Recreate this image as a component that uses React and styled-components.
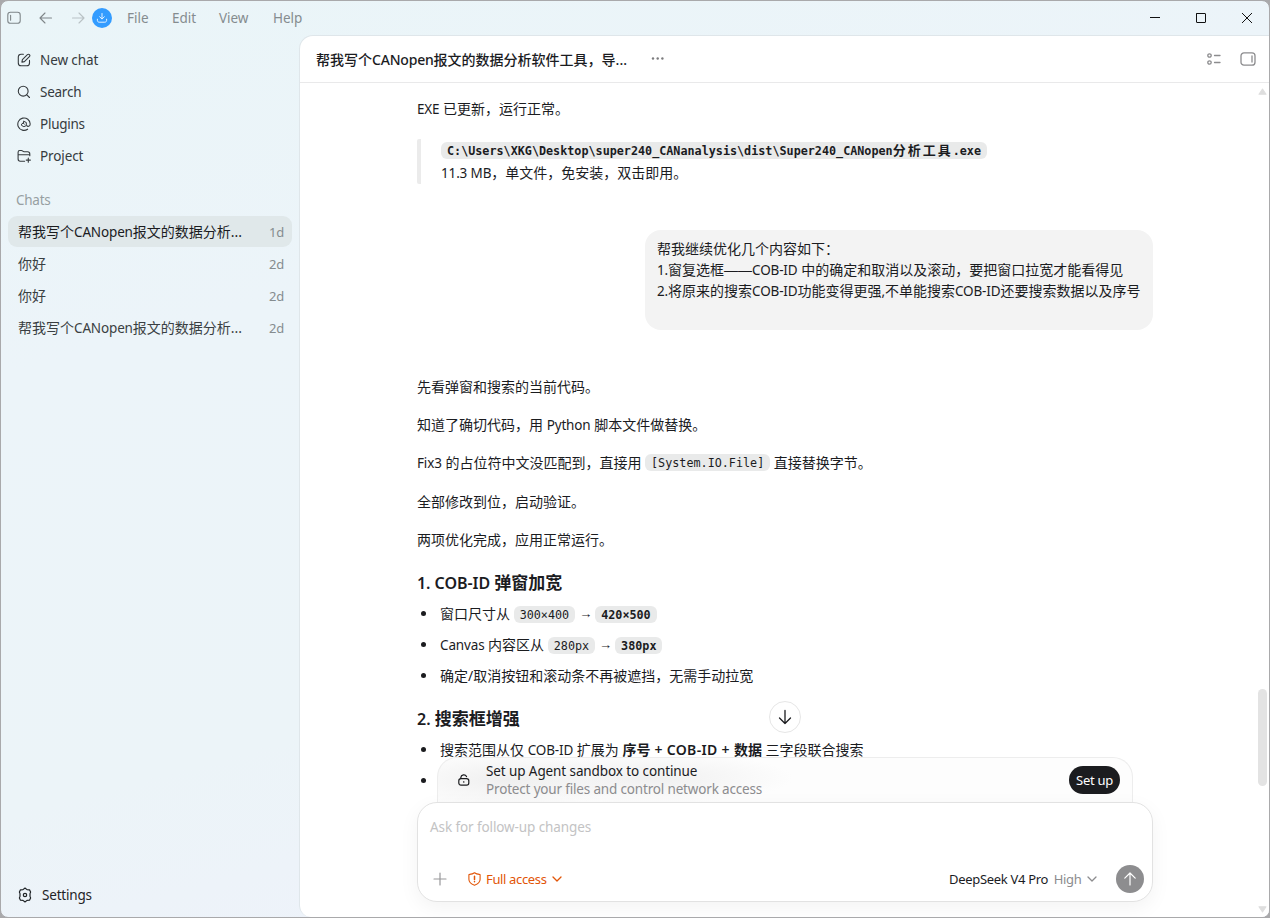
import styled, { createGlobalStyle } from 'styled-components';

const GlobalStyle = createGlobalStyle`
  * {
    box-sizing: border-box;
  }
  body {
    margin: 0;
    background: #a9a9ab;
    font-family: 'Noto Sans', 'Noto Sans CJK SC', sans-serif;
    font-size: 14px;
    color: #1b1c1f;
  }
  p, h3, ul, blockquote {
    margin: 0;
    padding: 0;
  }
  button {
    font-family: inherit;
    border: none;
    padding: 0;
  }
  svg {
    display: block;
    flex: none;
  }
`;

const Window = styled.div`
  width: 1270px;
  height: 918px;
  display: flex;
  flex-direction: column;
  overflow: hidden;
  border: 1px solid #a9a9ab;
  border-radius: 8px;
  background: linear-gradient(165deg, #eaf5f8 0%, #ecf4f9 30%, #ecf4f8 65%, #eef2fa 85%, #eef3fa 100%);
`;

/* latin runs inside of the CJK text, slightly tightened */
const En = styled.span`
  font-size: ${(props) => props.$size || 13.5}px;
  letter-spacing: ${(props) => props.$ls ?? -0.15}px;
`;

// ---- title bar
const TitleBar = styled.header`
  height: 34px;
  flex: none;
  display: flex;
  align-items: center;
  justify-content: space-between;
  padding-left: 6px;
`;

const TitleLeft = styled.div`
  display: flex;
  align-items: center;
  color: #7f8689;
`;

const NavIcon = styled.span`
  width: ${(props) => props.$w || 32}px;
  display: flex;
  opacity: ${(props) => (props.$dim ? 0.45 : 1)};
`;

const UpdateBadge = styled.button`
  width: 20px;
  height: 20px;
  border-radius: 50%;
  background: #339cff;
  color: #e6f3ff;
  display: flex;
  align-items: center;
  justify-content: center;
  margin-right: 15px;
`;

const MenuItem = styled.span`
  width: ${(props) => props.$w}px;
  font-size: 13.5px;
  line-height: 20px;
  letter-spacing: ${(props) => props.$ls || 0}px;
  color: #858c8f;
`;

const WinControls = styled.div`
  display: flex;
  margin-right: -1px;
  color: #111;
`;

const WinBtn = styled.span`
  width: 46px;
  height: 34px;
  display: flex;
  align-items: center;
  justify-content: center;
`;

// ---- sidebar
const Body = styled.div`
  flex: 1;
  min-height: 0;
  display: flex;
`;

const Sidebar = styled.nav`
  width: 298px;
  flex: none;
  display: flex;
  flex-direction: column;
  padding: 9px 7px 8px;
`;

const NavRow = styled.div`
  height: 32px;
  display: flex;
  align-items: center;
  gap: 9px;
  padding-left: 9px;
  font-size: 13.5px;
  letter-spacing: ${(props) => props.$ls || 0}px;
  color: #363b3e;
`;

const SectionTitle = styled.div`
  height: 32px;
  line-height: 32px;
  margin-top: 12px;
  padding-left: 8px;
  font-size: 13.5px;
  letter-spacing: -0.25px;
  color: #979fa2;
`;

const ChatRow = styled.div`
  height: 31px;
  margin-bottom: 1px;
  display: flex;
  align-items: center;
  justify-content: space-between;
  padding: 0 8px 0 10px;
  border-radius: 9px;
  white-space: nowrap;
  background: ${(props) => (props.$active ? '#e0e8ea' : 'transparent')};
  color: ${(props) => (props.$active ? '#1b1c1f' : '#3a3f42')};
`;

const ChatName = styled.span`
  padding-bottom: 2px;
`;

const Age = styled.span`
  font-size: 13px;
  letter-spacing: -0.2px;
  color: #858c8f;
`;

const SettingsRow = styled(NavRow)`
  margin-top: auto;
  margin-bottom: -2px;
  color: #1f2326;
`;

// ---- main card
const Main = styled.main`
  position: relative;
  flex: 1;
  min-width: 0;
  display: flex;
  flex-direction: column;
  background: #fff;
  border: 1px solid #dfe6ea;
  border-right: none;
  border-bottom: none;
  border-radius: 14px 0 0 12px;
  overflow: hidden;
`;

const MainHeader = styled.div`
  height: 47px;
  flex: none;
  display: flex;
  align-items: center;
  padding: 0 13px 0 16px;
  border-bottom: 1px solid #e9e9ea;
`;

const Title = styled.div`
  width: 335px;
  font-weight: 500;
  white-space: nowrap;
`;

const HeaderIcons = styled.div`
  margin-left: auto;
  display: flex;
  align-items: center;
  gap: 19px;
  color: #8c8c8e;
`;

const Thread = styled.div`
  flex: 1;
  min-height: 0;
  overflow: hidden;
  padding: 15px 0 0 117px;
`;

const Column = styled.article`
  width: 736px;
  display: flex;
  flex-direction: column;
  line-height: 22px;
  white-space: nowrap;
`;

const Para = styled.p`
  height: 22px;
  margin-bottom: 16.25px;
`;

const Quote = styled.blockquote`
  height: 45px;
  margin: 3px 0 46px;
  padding: 1px 0 0 20px;
  border-left: 4px solid #ebebeb;
  border-radius: 2px;
`;

const QuoteLine = styled.div`
  height: 22px;
`;

const Bubble = styled.div`
  width: 508px;
  height: 100px;
  align-self: flex-end;
  margin-bottom: 45.65px;
  padding: 8px 12px;
  border-radius: 16px;
  background: #f3f3f3;
  line-height: 21px;
`;

const BubbleLine = styled.div`
  height: 21px;
`;

const Dash = styled.span`
  font-family: 'Liberation Sans', sans-serif;
  line-height: 1;
`;

const Code = styled.code`
  display: inline-block;
  height: 17px;
  line-height: 18px;
  padding: 0 6px;
  border-radius: 6px;
  background: #e9eaea;
  vertical-align: 1px;
  font-family: 'DejaVu Sans Mono', 'Noto Sans CJK SC', monospace;
  font-size: 11.76px;
  font-weight: ${(props) => (props.$bold ? 700 : 400)};
`;

const CodeHan = styled.span`
  font-size: 13px;
  letter-spacing: 2px;
  line-height: 1;
`;

const Heading = styled.h3`
  height: 26px;
  line-height: 26px;
  margin-top: ${(props) => props.$top || 0}px;
  font-size: 17px;
  font-weight: 600;
`;

const List = styled.ul`
  list-style: none;
  padding-top: 3px;
`;

const Item = styled.li`
  height: 31px;
  line-height: 30px;
  display: flex;
  align-items: center;
  white-space: pre;

  &::before {
    content: '';
    width: 5px;
    height: 5px;
    margin: 0 14px 2px 4px;
    border-radius: 50%;
    background: #1b1c1f;
  }
`;

const Arrow = styled.span`
  padding: 0 3px 0 4px;
  font-family: 'Liberation Sans', sans-serif;
  font-size: 13px;
`;

const Strong = styled.strong`
  font-weight: 600;
`;

// ---- scrollbar, drawn over the thread
const ScrollTrack = styled.div`
  position: absolute;
  top: 52px;
  right: 1px;
  bottom: 4px;
  width: 11px;
  display: flex;
  flex-direction: column;
  align-items: center;
`;

const Thumb = styled.div`
  width: 9px;
  height: 97px;
  margin-top: 594px;
  margin-bottom: auto;
  border-radius: 5px;
  background: #e3e3e3;
`;

// ---- composer dock
const Dock = styled.div`
  position: absolute;
  left: 117px;
  bottom: 15px;
  width: 736px;
  display: flex;
  flex-direction: column;
  align-items: center;
`;

const ScrollDown = styled.button`
  width: 32px;
  height: 32px;
  margin-bottom: 24px;
  border: 1px solid #e6e6e6;
  border-radius: 50%;
  background: #fff;
  color: #1b1c1f;
  display: flex;
  align-items: center;
  justify-content: center;
`;

const Banner = styled.div`
  width: 696px;
  height: 45px;
  display: flex;
  align-items: center;
  padding: 0 12px 0 20px;
  border: 1px solid #ededed;
  border-bottom: none;
  border-radius: 20px 20px 0 0;
  background:
    radial-gradient(ellipse 120px 28px at 70px 22px, #efefef, rgba(241, 241, 241, 0)),
    radial-gradient(ellipse 140px 26px at 215px 20px, #f0f0f0, rgba(242, 242, 242, 0)),
    #fdfdfd;
`;

const BannerText = styled.div`
  margin-left: 16px;
  font-size: 13.5px;
  line-height: 18px;
  letter-spacing: -0.1px;
`;

const Muted = styled.div`
  letter-spacing: -0.17px;
  color: #8c8c8e;
`;

const SetupBtn = styled.button`
  width: 51px;
  height: 28px;
  margin-left: auto;
  border-radius: 14px;
  background: #1b1c1f;
  color: #fff;
  font-size: 13px;
  letter-spacing: -0.3px;
`;

const Composer = styled.div`
  width: 736px;
  height: 100px;
  display: flex;
  flex-direction: column;
  justify-content: space-between;
  padding: 13px 8px 7px 12px;
  border: 1px solid #e2e2e2;
  border-radius: 20px;
  background: #fff;
  box-shadow: 0 6px 20px rgba(0, 0, 0, 0.05);
`;

const Placeholder = styled.div`
  line-height: 22px;
  font-size: 13.5px;
  letter-spacing: -0.1px;
  color: #c3c3c4;
`;

const Tools = styled.div`
  height: 30px;
  display: flex;
  align-items: center;
  font-size: 13px;
`;

const Access = styled.span`
  display: flex;
  align-items: center;
  gap: 5px;
  margin-left: 18px;
  letter-spacing: -0.35px;
  color: #e25507;
`;

const Model = styled.span`
  display: flex;
  align-items: center;
  gap: 5.5px;
  margin-left: auto;
  margin-right: 19px;
  letter-spacing: -0.3px;
  color: #1b1c1f;
`;

const Effort = styled.span`
  color: #8c8c8e;
`;

const Send = styled.button`
  width: 28px;
  height: 28px;
  border-radius: 50%;
  background: #8d8d8f;
  color: #fff;
  display: flex;
  align-items: center;
  justify-content: center;
`;

const Svg = ({ size = 14, w, h, sw = 1.1, children }) => (
  <svg
    width={w || size}
    height={h || size}
    viewBox={`0 0 ${w || size} ${h || size}`}
    fill="none"
    stroke="currentColor"
    strokeWidth={sw}
    strokeLinecap="round"
    strokeLinejoin="round"
  >
    {children}
  </svg>
);

const ChevronDown = () => (
  <Svg w={10} h={6} sw={1.3}><path d="M1 1l4 4 4-4" /></Svg>
);

const navItems = [
  {
    label: 'New chat',
    ls: -0.1,
    icon: <><path d="M6.4 1.3H4.1a2.8 2.8 0 0 0-2.8 2.8v5.8a2.8 2.8 0 0 0 2.8 2.8h5.6a2.8 2.8 0 0 0 2.8-2.8V7.4" /><path d="M4.9 9.1l.5-2.5 5-5a1.4 1.4 0 0 1 2 2l-5 5z" /></>,
  },
  {
    label: 'Search',
    ls: -0.25,
    icon: <><circle cx="6.2" cy="6.2" r="4.9" /><path d="M9.8 9.8l2.7 2.7" /></>,
  },
  {
    label: 'Plugins',
    ls: -0.25,
    icon: <><path d="M10.6 12.2a6.2 6.2 0 1 1 2.6-5.2c0 2.6-2.6 2.9-3.4 1.6" /><path d="M6.9 4.4l2.4 1.1v3.1L6.9 9.7 4.5 8.4V7.1l1.8-1 .6-1.7zM6.3 6.1l1 1.1" strokeWidth="1" /></>,
  },
  {
    label: 'Project',
    ls: -0.1,
    icon: <><path d="M7.6 12.3H3.3a2.2 2.2 0 0 1-2.2-2.2V3.2c0-1 .6-1.7 1.6-1.7h1.7c1.3 0 1.5 1.2 2.6 1.2h3.6c1.4 0 2.2.9 2.2 2.2v1.8M1.2 5.7h11.4" /><path d="M11.3 9v4.2M9.2 11.1h4.2" /></>,
  },
];

const chats = [
  { id: 1, long: true, age: '1d' },
  { id: 2, age: '2d' },
  { id: 3, age: '2d' },
  { id: 4, long: true, age: '2d' },
];

function TopBar() {
  return (
    <TitleBar>
      <TitleLeft>
        <NavIcon $w={32}>
          <Svg><rect x="0.8" y="1.3" width="12.4" height="11" rx="2.6" /><path d="M3.6 4.4v4.8" /></Svg>
        </NavIcon>
        <NavIcon>
          <Svg><path d="M12.5 7H1.2M6 2L1 7l5 5" /></Svg>
        </NavIcon>
        <NavIcon $dim $w={21}>
          <Svg><path d="M1.5 7h11.3M8 2l5 5-5 5" /></Svg>
        </NavIcon>
        <UpdateBadge>
          <Svg size={12} sw={1}><path d="M6 1.5v5.3M3.7 4.8L6 7l2.3-2.2M1.4 7.2v1.2c0 1 .7 1.8 1.8 1.8h5.6c1.1 0 1.8-.8 1.8-1.8V7.2" /></Svg>
        </UpdateBadge>
        <MenuItem $w={45}>File</MenuItem>
        <MenuItem $w={47}>Edit</MenuItem>
        <MenuItem $w={54} $ls={-0.1}>View</MenuItem>
        <MenuItem $w={40}>Help</MenuItem>
      </TitleLeft>
      <WinControls>
        <WinBtn><Svg size={10} sw={1}><path d="M0 4.5h10" /></Svg></WinBtn>
        <WinBtn><Svg size={10} sw={1}><rect x="0.5" y="0.5" width="9" height="9" rx="0.4" /></Svg></WinBtn>
        <WinBtn><Svg size={10} sw={1}><path d="M0.3 0.3l9.4 9.4M9.7 0.3L0.3 9.7" /></Svg></WinBtn>
      </WinControls>
    </TitleBar>
  );
}

function SideNav() {
  return (
    <Sidebar>
      {navItems.map((item) => (
        <NavRow key={item.label} $ls={item.ls}>
          <Svg>{item.icon}</Svg>
          <span>{item.label}</span>
        </NavRow>
      ))}
      <SectionTitle>Chats</SectionTitle>
      {chats.map((chat) => (
        <ChatRow key={chat.id} $active={chat.id === 1}>
          <ChatName>
            {chat.long ? <>帮我写个<En>CANopen</En>报文的数据分析...</> : '你好'}
          </ChatName>
          <Age>{chat.age}</Age>
        </ChatRow>
      ))}
      <SettingsRow $ls={-0.2}>
        <Svg size={16} sw={1.2}>
          <path d="M8 1l2 1.6 2.5.2 1.1 2.3-.6 1.5v2.8l.6 1.5-1.1 2.3-2.5.2L8 15l-2-1.6-2.5-.2-1.1-2.3.6-1.5V6.6l-.6-1.5 1.1-2.3 2.5-.2z" />
          <circle cx="8" cy="8" r="1.7" />
        </Svg>
        <span>Settings</span>
      </SettingsRow>
    </Sidebar>
  );
}

function Messages() {
  return (
    <Thread>
      <Column>
        <Para><En>EXE</En> 已更新，运行正常。</Para>
        <Quote>
          <QuoteLine>
            <Code $bold>C:\Users\XKG\Desktop\super240_CANanalysis\dist\Super240_CANopen<CodeHan>分析工具</CodeHan>.exe</Code>
          </QuoteLine>
          <QuoteLine><En>11.3 MB</En>，单文件，免安装，双击即用。</QuoteLine>
        </Quote>
        <Bubble>
          <BubbleLine>帮我继续优化几个内容如下：</BubbleLine>
          <BubbleLine><En>1.</En>窗复选框<Dash>——</Dash><En>COB-ID</En> 中的确定和取消以及滚动，要把窗口拉宽才能看得见</BubbleLine>
          <BubbleLine><En>2.</En>将原来的搜索<En>COB-ID</En>功能变得更强<En>,</En>不单能搜索<En>COB-ID</En>还要搜索数据以及序号</BubbleLine>
        </Bubble>
        <Para>先看弹窗和搜索的当前代码。</Para>
        <Para>知道了确切代码，用 <En>Python</En> 脚本文件做替换。</Para>
        <Para><En>Fix3</En> 的占位符中文没匹配到，直接用 <Code>[System.IO.File]</Code> 直接替换字节。</Para>
        <Para>全部修改到位，启动验证。</Para>
        <Para>两项优化完成，应用正常运行。</Para>
        <Heading $top={2.75}><En $size={16} $ls={-0.05}>1. COB-ID </En>弹窗加宽</Heading>
        <List>
          <Item>窗口尺寸从 <Code>300×400</Code><Arrow>→</Arrow><Code $bold>420×500</Code></Item>
          <Item><En>Canvas</En> 内容区从 <Code>280px</Code><Arrow>→</Arrow><Code $bold>380px</Code></Item>
          <Item>确定/取消按钮和滚动条不再被遮挡，无需手动拉宽</Item>
        </List>
        <Heading $top={14}><En $size={16} $ls={0}>2. </En>搜索框增强</Heading>
        <List>
          <Item>搜索范围从仅 <En>COB-ID</En> 扩展为 <Strong>序号<En $size={14} $ls={0.35}> + COB-ID + </En>数据</Strong> 三字段联合搜索</Item>
          <Item />
        </List>
      </Column>
    </Thread>
  );
}

function ComposerDock() {
  return (
    <Dock>
      <ScrollDown>
        <Svg size={16} sw={1.3}><path d="M8 1.5v13M2.5 9L8 14.5 13.5 9" /></Svg>
      </ScrollDown>
      <Banner>
        <Svg w={12} h={12} sw={1.2}><rect x="0.8" y="4.6" width="10" height="6.6" rx="2.2" /><path d="M2.8 4.4V3.6a3 3 0 0 1 5.7-1M5.8 7.7v.5" /></Svg>
        <BannerText>
          <div>Set up Agent sandbox to continue</div>
          <Muted>Protect your files and control network access</Muted>
        </BannerText>
        <SetupBtn>Set up</SetupBtn>
      </Banner>
      <Composer>
        <Placeholder>Ask for follow-up changes</Placeholder>
        <Tools>
          <Svg w={20} h={14} sw={1.2}><g stroke="#98989a"><path d="M10 1v12M4 7h12" /></g></Svg>
          <Access>
            <Svg w={13} h={14}><path d="M6.5.8c1.6 1.2 3.2 1.5 5 1.6.4 0 .6.3.6.6v4.2c0 3-2.4 4.9-5.6 6C3.3 12.1.9 10.2.9 7.200V3c0-.3.2-.6.6-.6 1.800-.1 3.400-.4 5-1.600z" /><path d="M6.5 4.2v3.2M6.5 9.6v.1" strokeWidth="1.5" /></Svg>
            <span>Full access</span>
            <ChevronDown />
          </Access>
          <Model>
            <span>DeepSeek V4 Pro</span>
            <Effort>High</Effort>
            <Effort><ChevronDown /></Effort>
          </Model>
          <Send>
            <Svg sw={1.2}><path d="M7 13V1M1.8 6.2L7 1l5.2 5.2" /></Svg>
          </Send>
        </Tools>
      </Composer>
    </Dock>
  );
}

export default function App() {
  return (
    <>
      <GlobalStyle />
      <Window>
        <TopBar />
        <Body>
          <SideNav />
          <Main>
            <MainHeader>
              <Title>帮我写个<En $size={14} $ls={-0.2}>CANopen</En>报文的数据分析软件工具，导...</Title>
              <Svg><g fill="#7c7c7e" stroke="none"><circle cx="2" cy="6.5" r="1.2" /><circle cx="6.7" cy="6.5" r="1.2" /><circle cx="11.4" cy="6.5" r="1.2" /></g></Svg>
              <HeaderIcons>
                <Svg w={14} h={12} sw={1.3}><circle cx="2.5" cy="2.5" r="1.7" /><circle cx="2.5" cy="9.5" r="1.7" /><path d="M7.5 2.5h5.5M7.5 9.5h5.5" /></Svg>
                <Svg w={16} h={14} sw={1.3}><rect x="1" y="0.8" width="14" height="12.4" rx="3" /><path d="M12 4v6" /></Svg>
              </HeaderIcons>
            </MainHeader>
            <Messages />
            <ScrollTrack>
              <Svg w={9} h={7}><path d="M4.5 1L8 6.2H1z" fill="#dedede" stroke="#dedede" /></Svg>
              <Thumb />
              <Svg w={9} h={7}><path d="M4.5 6L1 .8h7z" fill="#dedede" stroke="#dedede" /></Svg>
            </ScrollTrack>
            <ComposerDock />
          </Main>
        </Body>
      </Window>
    </>
  );
}
